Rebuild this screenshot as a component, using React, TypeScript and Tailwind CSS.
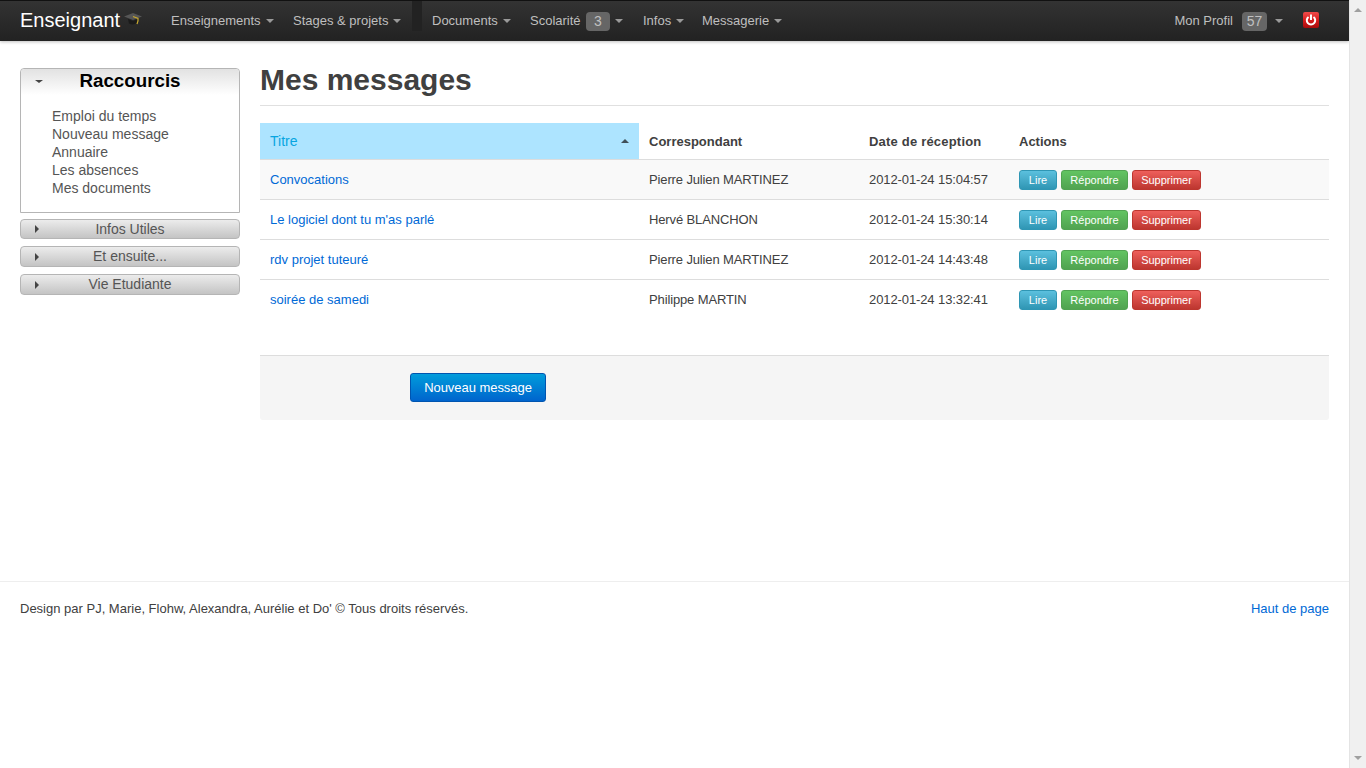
import React from "react";

const Caret = ({ c = "border-t-[#9a9a9a]" }: { c?: string }) => (
  <span className={`inline-block w-0 h-0 border-x-4 border-x-transparent border-t-4 ${c}`} />
);

const NavItem = ({ label, badge, w }: { label: string; badge?: string; w: string }) => (
  <div className={`flex items-center h-full px-[10px] text-[#bfbfbf] text-[13px] ${w}`}>
    <span>{label}</span>
    {badge && (
      <span className="ml-[5px] w-[25px] h-[19px] rounded-[4px] bg-[#666666] text-[#c0c0c0] text-[14px] flex items-center justify-center">
        {badge}
      </span>
    )}
    <span className="ml-[5px] flex"><Caret /></span>
  </div>
);

const Cap = () => (
  <svg width="18" height="12" viewBox="0 0 18 12" className="ml-[4px] -mt-[5px]">
    <path d="M0 3.5 L9 0 L18 3.5 L9 7 Z" fill="#565656" />
    <path d="M4 6 L9 8 L13 6.5 L13 10 Q9 12.5 5 10.5 Z" fill="#1a1a1a" />
    <path d="M9 3.5 L14 5.5 L14 8 L13 11" stroke="#c9a92e" strokeWidth="1.2" fill="none" />
  </svg>
);

const Power = () => (
  <div className="w-[16px] h-[16px] rounded-[2px] bg-gradient-to-b from-[#f04a4a] via-[#d91c1c] to-[#a80c0c] flex items-center justify-center">
    <svg width="12" height="12" viewBox="0 0 12 12" fill="none" stroke="#ffffff" strokeWidth="2" strokeLinecap="butt">
      <path d="M3.5 3 A4.2 4.2 0 1 0 8.5 3" />
      <path d="M6 0.5 V6" />
    </svg>
  </div>
);

const Collapsed = ({ label, h }: { label: string; h: string }) => (
  <div className={`relative ${h} rounded-[4px] border border-[#b5b5b5] bg-gradient-to-b from-[#ececec] to-[#c4c4c4] flex items-center justify-center text-[14px] leading-[14px] pb-[1px] text-[#555555]`}>
    <span className="absolute left-[14px] top-1/2 -translate-y-1/2 w-0 h-0 border-y-4 border-y-transparent border-l-[4px] border-l-[#444444]" />
    {label}
  </div>
);

const Btn = ({ label, cls }: { label: string; cls: string }) => (
  <button className={`h-[20px] pt-[1px] rounded-[3px] border text-[11px] leading-none text-white ${cls}`}>{label}</button>
);

const rows = [
  ["Convocations", "Pierre Julien MARTINEZ", "2012-01-24 15:04:57"],
  ["Le logiciel dont tu m'as parlé", "Hervé BLANCHON", "2012-01-24 15:30:14"],
  ["rdv projet tuteuré", "Pierre Julien MARTINEZ", "2012-01-24 14:43:48"],
  ["soirée de samedi", "Philippe MARTIN", "2012-01-24 13:32:41"],
];

const Scrollbar = () => (
  <div className="w-[17px] shrink-0 h-screen bg-[#f0f0f0] border-l border-[#e4e4e4] flex flex-col items-center justify-between py-[8px]">
    <span className="w-0 h-0 border-x-[4px] border-x-transparent border-b-[4px] border-b-[#a0a0a0]" />
    <span className="w-0 h-0 border-x-[4px] border-x-transparent border-t-[4px] border-t-[#a0a0a0]" />
  </div>
);

export default function App() {
  return (
    <div className="flex h-screen overflow-hidden bg-white text-[#404040] text-[13px] leading-[18px] font-['Liberation_Sans',Arial,sans-serif]">
      <div className="w-[1349px] shrink-0 flex flex-col">
        <header className="h-[41px] shrink-0 flex items-center bg-gradient-to-b from-[#333333] to-[#222222] border-t border-[#111111] shadow-[0_1px_3px_rgba(0,0,0,0.25)]">
          <div className="flex items-center h-full pl-[20px] w-[161px] shrink-0">
            <span className="text-white text-[20px] -mt-[3px]">Enseignant</span>
            <Cap />
          </div>
          <div className="flex items-center h-full">
            <NavItem label="Enseignements" w="w-[122px]" />
            <NavItem label="Stages & projets" w="w-[129px]" />
            <div className="w-[10px] h-[30px] self-start bg-[#222222]" />
            <NavItem label="Documents" w="w-[98px]" />
            <NavItem label="Scolarité" badge="3" w="w-[113px]" />
            <NavItem label="Infos" w="w-[59px]" />
            <NavItem label="Messagerie" w="w-[100px]" />
          </div>
          <div className="ml-auto flex items-center h-full pr-[30px]">
            <span className="text-[#bfbfbf] text-[13px]">Mon Profil</span>
            <span className="ml-[9px] w-[25px] h-[19px] rounded-[4px] bg-[#666666] text-[#c0c0c0] text-[14px] flex items-center justify-center">57</span>
            <span className="ml-[8px] flex"><Caret /></span>
            <span className="ml-[20px] -mt-[3px]"><Power /></span>
          </div>
        </header>

        <div className="flex h-[540px] shrink-0 px-[20px]">
          <aside className="w-[220px] shrink-0 pt-[27px] flex flex-col text-[14px]">
            <div className="h-[145px] rounded-t-[4px] border border-[#b5b5b5] bg-white">
              <div className="relative h-[26px] pb-[2px] rounded-t-[4px] bg-gradient-to-b from-[#e2e2e2] to-white flex items-center justify-center text-[18.75px] font-bold text-black">
                <span className="absolute left-[14px] top-[11px] w-0 h-0 border-x-[4px] border-x-transparent border-t-[3px] border-t-[#444444]" />
                Raccourcis
              </div>
              <ul className="pl-[31px] pt-[12px] text-[#555555]">
                {["Emploi du temps", "Nouveau message", "Annuaire", "Les absences", "Mes documents"].map((t) => (
                  <li key={t}>{t}</li>
                ))}
              </ul>
            </div>
            <div className="mt-[6px]"><Collapsed label="Infos Utiles" h="h-[20px]" /></div>
            <div className="mt-[7px]"><Collapsed label="Et ensuite..." h="h-[21px]" /></div>
            <div className="mt-[7px]"><Collapsed label="Vie Etudiante" h="h-[21px]" /></div>
          </aside>

          <main className="flex-1 ml-[20px] min-w-0">
            <h1 className="h-[65px] border-b border-[#e0e0e0] pt-[21px] text-[30px] leading-[36px] font-bold text-[#404040]">Mes messages</h1>
            <div className="mt-[17px] grid grid-cols-[379px_220px_150px_320px] h-[37px] border-b border-[#dddddd] font-bold items-stretch">
              <div className="flex items-center justify-between px-[10px] bg-[#ade4ff] text-[#08a5e1] font-normal text-[14px]">
                <span>Titre</span>
                <span className="w-0 h-0 border-x-4 border-x-transparent border-b-4 border-b-[#404f58]" />
              </div>
              <div className="flex items-center px-[10px] pt-[2px]">Correspondant</div>
              <div className="flex items-center px-[10px] pt-[2px] tracking-[0.2px]">Date de réception</div>
              <div className="flex items-center px-[10px] pt-[2px]">Actions</div>
            </div>
            {rows.map((r, i) => (
              <div
                key={r[0]}
                className={`grid grid-cols-[379px_220px_150px_320px] h-[40px] items-center ${i < 3 ? "border-b border-[#dddddd]" : ""} ${i === 0 ? "bg-[#f9f9f9]" : ""}`}
              >
                <a className="px-[10px] text-[#0069d6]">{r[0]}</a>
                <div className="px-[10px] tracking-[-0.13px]">{r[1]}</div>
                <div className="px-[10px] tracking-[-0.1px]">{r[2]}</div>
                <div className="px-[10px] flex gap-[4px] self-start mt-[10px]">
                  <Btn label="Lire" cls="w-[38px] border-[#2f96b4] bg-gradient-to-b from-[#5bc0de] to-[#2f96b4]" />
                  <Btn label="Répondre" cls="w-[67px] border-[#51a351] bg-gradient-to-b from-[#62c462] to-[#51a351]" />
                  <Btn label="Supprimer" cls="w-[69px] border-[#bd362f] bg-gradient-to-b from-[#ee5f5b] to-[#bd362f]" />
                </div>
              </div>
            ))}
            <div className="mt-[35px] h-[65px] border-t border-[#dddddd] bg-[#f5f5f5] rounded-b-[3px] pl-[150px] pt-[17px]">
              <button className="w-[136px] h-[29px] rounded-[3px] border border-[#0055b0] bg-gradient-to-b from-[#049cdb] to-[#0064cd] text-white text-[13px] tracking-[-0.05px]">
                Nouveau message
              </button>
            </div>
          </main>
        </div>

        <footer className="border-t border-[#eeeeee] h-[60px] px-[20px] pt-[18px] flex items-start justify-between">
          <span>Design par PJ, Marie, Flohw, Alexandra, Aurélie et Do' © Tous droits réservés.</span>
          <a className="text-[#0069d6]">Haut de page</a>
        </footer>
      </div>
      <Scrollbar />
    </div>
  );
}
